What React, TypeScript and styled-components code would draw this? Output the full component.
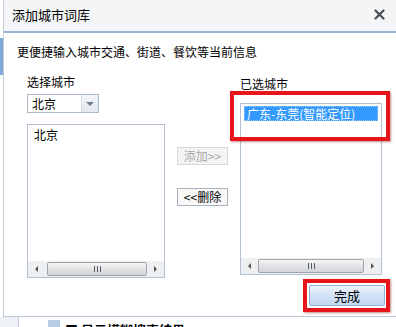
import React from "react";
import styled, { createGlobalStyle } from "styled-components";

const Global = createGlobalStyle`
  html, body { margin: 0; padding: 0; background: #ffffff; }
  body { font-family: "Noto Sans CJK SC", "Liberation Sans", sans-serif; font-size: 12px; color: #000; }
`;

const Page = styled.div`
  position: relative;
  width: 396px;
  height: 327px;
  overflow: hidden;
  background: #ffffff;
  display: flex;
  flex-direction: column;
`;

const Backdrop = styled.div`
  display: flex;
  height: 317px;
`;

const Edge = styled.div`
  width: 3px;
  background: linear-gradient(#ffffff 0 38px, #7fa7d8 38px 75px, #ffffff 75px);
`;

const Dialog = styled.div`
  flex: 1;
  height: 317px;
  box-sizing: border-box;
  border-left: 1px solid #c3ccd8;
  border-bottom: 1px solid #b9c6d6;
  display: flex;
  flex-direction: column;
  background: #ffffff;
`;

const TitleBar = styled.div`
  height: 29px;
  flex: none;
  background: #f4f5f6;
  border-bottom: 2px solid #98b5da;
  display: flex;
  align-items: center;
  justify-content: space-between;
  padding: 0 11px 2px 8px;
`;

const Title = styled.span`
  font-size: 13px;
  line-height: 16px;
`;

const Close = styled.svg`
  width: 11px;
  height: 11px;
`;

const Body = styled.div`
  flex: 1;
  display: flex;
  flex-direction: column;
  padding-top: 11px;
`;

const Desc = styled.div`
  padding-left: 13px;
  line-height: 16px;
  height: 16px;
`;

const Columns = styled.div`
  display: flex;
  margin-top: 14px;
  margin-left: 23px;
  gap: 12px;
`;

const Column = styled.div<{ $w: number; $pt?: number }>`
  width: ${(p) => p.$w}px;
  padding-top: ${(p) => p.$pt ?? 0}px;
  display: flex;
  flex-direction: column;
  flex: none;
`;

const Label = styled.div`
  line-height: 16px;
  height: 16px;
`;

const Select = styled.div`
  margin-top: 4px;
  width: 72px;
  height: 19px;
  box-sizing: border-box;
  border: 1px solid #aab8c8;
  display: flex;
  align-items: stretch;
`;

const SelectText = styled.span`
  flex: 1;
  padding-left: 4px;
  line-height: 17px;
`;

const SelectArrow = styled.div`
  width: 16px;
  background: linear-gradient(#f3f5f8, #e3e8ee);
  border-left: 1px solid #d6dde6;
  display: flex;
  align-items: center;
  justify-content: center;
  &::after {
    content: "";
    border-left: 4px solid transparent;
    border-right: 4px solid transparent;
    border-top: 4px solid #6b7b8c;
  }
`;

const List = styled.div<{ $h: number; $mt: number }>`
  position: relative;
  margin-top: ${(p) => p.$mt}px;
  height: ${(p) => p.$h}px;
  box-sizing: border-box;
  border: 1px solid #b3c1d1;
  display: flex;
  flex-direction: column;
`;

const ListItems = styled.div`
  flex: 1;
  padding: 2px 3px;
`;

const Item = styled.div<{ $sel?: boolean }>`
  line-height: 15px;
  height: 15px;
  padding-left: 3px;
  color: ${(p) => (p.$sel ? "#ffffff" : "#000")};
  background: ${(p) => (p.$sel ? "#3399ff" : "transparent")};
  outline: ${(p) => (p.$sel ? "1px dotted #9cc8f5" : "none")};
  outline-offset: -1px;
`;

const HScroll = styled.div`
  height: 16px;
  flex: none;
  background: #eeeff1;
  display: flex;
  align-items: center;
`;

const ScrollArrow = styled.div<{ $dir: "l" | "r" }>`
  width: 17px;
  display: flex;
  justify-content: center;
  &::after {
    content: "";
    border-top: 3px solid transparent;
    border-bottom: 3px solid transparent;
    ${(p) => (p.$dir === "l" ? "border-right: 3px solid #555;" : "border-left: 3px solid #555;")}
  }
`;

const Thumb = styled.div<{ $ml: number }>`
  margin-left: ${(p) => p.$ml}px;
  flex: 1;
  height: 14px;
  box-sizing: border-box;
  border: 1px solid #9fa4aa;
  border-radius: 2px;
  background: linear-gradient(#f6f6f6, #e0e1e3 55%, #d2d4d7);
  display: flex;
  align-items: center;
  justify-content: center;
  gap: 2px;
`;

const Grip = styled.span`
  width: 1px;
  height: 6px;
  background: #5a5f66;
`;

const Btn = styled.div<{ $disabled?: boolean; $mt?: number }>`
  margin-top: ${(p) => p.$mt ?? 0}px;
  width: 51px;
  height: 18px;
  box-sizing: border-box;
  border: 1px solid ${(p) => (p.$disabled ? "#d6d8db" : "#a9b3be")};
  background: ${(p) => (p.$disabled ? "#f4f4f4" : "#f8f8f8")};
  color: ${(p) => (p.$disabled ? "#a8a8a8" : "#000")};
  display: flex;
  align-items: center;
  justify-content: center;
  line-height: 16px;
`;

const RedBox = styled.div<{ $l: number; $t: number; $w: number; $h: number }>`
  position: absolute;
  left: ${(p) => p.$l}px;
  top: ${(p) => p.$t}px;
  width: ${(p) => p.$w}px;
  height: ${(p) => p.$h}px;
  box-sizing: border-box;
  border: 4px solid #e5151b;
  box-shadow: 1px 1px 2px rgba(120, 0, 0, 0.45);
  pointer-events: none;
`;

const Footer = styled.div`
  display: flex;
  justify-content: flex-end;
  padding-right: 11px;
  margin-top: 7px;
`;

const DoneBtn = styled.div`
  position: relative;
  width: 76px;
  height: 21px;
  box-sizing: border-box;
  border: 1px solid #8fb0d8;
  border-radius: 2px;
  background: linear-gradient(#eef4fc, #d3e2f6 50%, #c2d6f1);
  display: flex;
  align-items: center;
  justify-content: center;
  font-size: 13px;
`;

const BottomStrip = styled.div`
  height: 10px;
  display: flex;
  overflow: hidden;
`;

const StripSide = styled.div`
  width: 18px;
  background: #eef2f7;
  border-right: 1px solid #c6ccd4;
`;

const StripIcon = styled.div`
  margin-left: 29px;
  margin-top: 3px;
  width: 12px;
  height: 7px;
  background: #b8cde6;
`;

const StripText = styled.div`
  margin-left: 5px;
  margin-top: 5px;
  font-size: 13px;
  line-height: 16px;
  font-weight: bold;
  white-space: nowrap;
`;

export default function App() {
  return (
    <>
      <Global />
      <Page>
        <Backdrop>
          <Edge />
          <Dialog>
            <TitleBar>
              <Title>添加城市词库</Title>
              <Close viewBox="0 0 11 11">
                <path d="M1.5 1.5 L9.5 9.5 M9.5 1.5 L1.5 9.5" stroke="#4a4f55" strokeWidth="2.2" strokeLinecap="round" />
              </Close>
            </TitleBar>
            <Body>
              <Desc>更便捷输入城市交通、街道、餐饮等当前信息</Desc>
              <Columns>
                <Column $w={138}>
                  <Label>选择城市</Label>
                  <Select>
                    <SelectText>北京</SelectText>
                    <SelectArrow />
                  </Select>
                  <List $h={154} $mt={11}>
                    <ListItems>
                      <Item>北京</Item>
                    </ListItems>
                    <HScroll>
                      <ScrollArrow $dir="l" />
                      <Thumb $ml={2}>
                        <Grip />
                        <Grip />
                        <Grip />
                      </Thumb>
                      <ScrollArrow $dir="r" />
                    </HScroll>
                  </List>
                </Column>
                <Column $w={51} $pt={73}>
                  <Btn $disabled>添加&gt;&gt;</Btn>
                  <Btn $mt={23}>&lt;&lt;删除</Btn>
                </Column>
                <Column $w={142} $pt={2}>
                  <Label>已选城市</Label>
                  <List $h={172} $mt={11}>
                    <ListItems>
                      <Item $sel>广东-东莞(智能定位)</Item>
                    </ListItems>
                    <HScroll>
                      <ScrollArrow $dir="l" />
                      <Thumb $ml={0}>
                        <Grip />
                        <Grip />
                        <Grip />
                      </Thumb>
                      <ScrollArrow $dir="r" />
                    </HScroll>
                    <RedBox $l={-11} $t={-13} $w={160} $h={50} />
                  </List>
                </Column>
              </Columns>
              <Footer>
                <DoneBtn>
                  完成
                  <RedBox $l={-7} $t={-7} $w={87} $h={33} />
                </DoneBtn>
              </Footer>
            </Body>
          </Dialog>
        </Backdrop>
        <BottomStrip>
          <StripSide />
          <StripIcon />
          <StripText>■ 显示模糊搜索结果</StripText>
        </BottomStrip>
      </Page>
    </>
  );
}
